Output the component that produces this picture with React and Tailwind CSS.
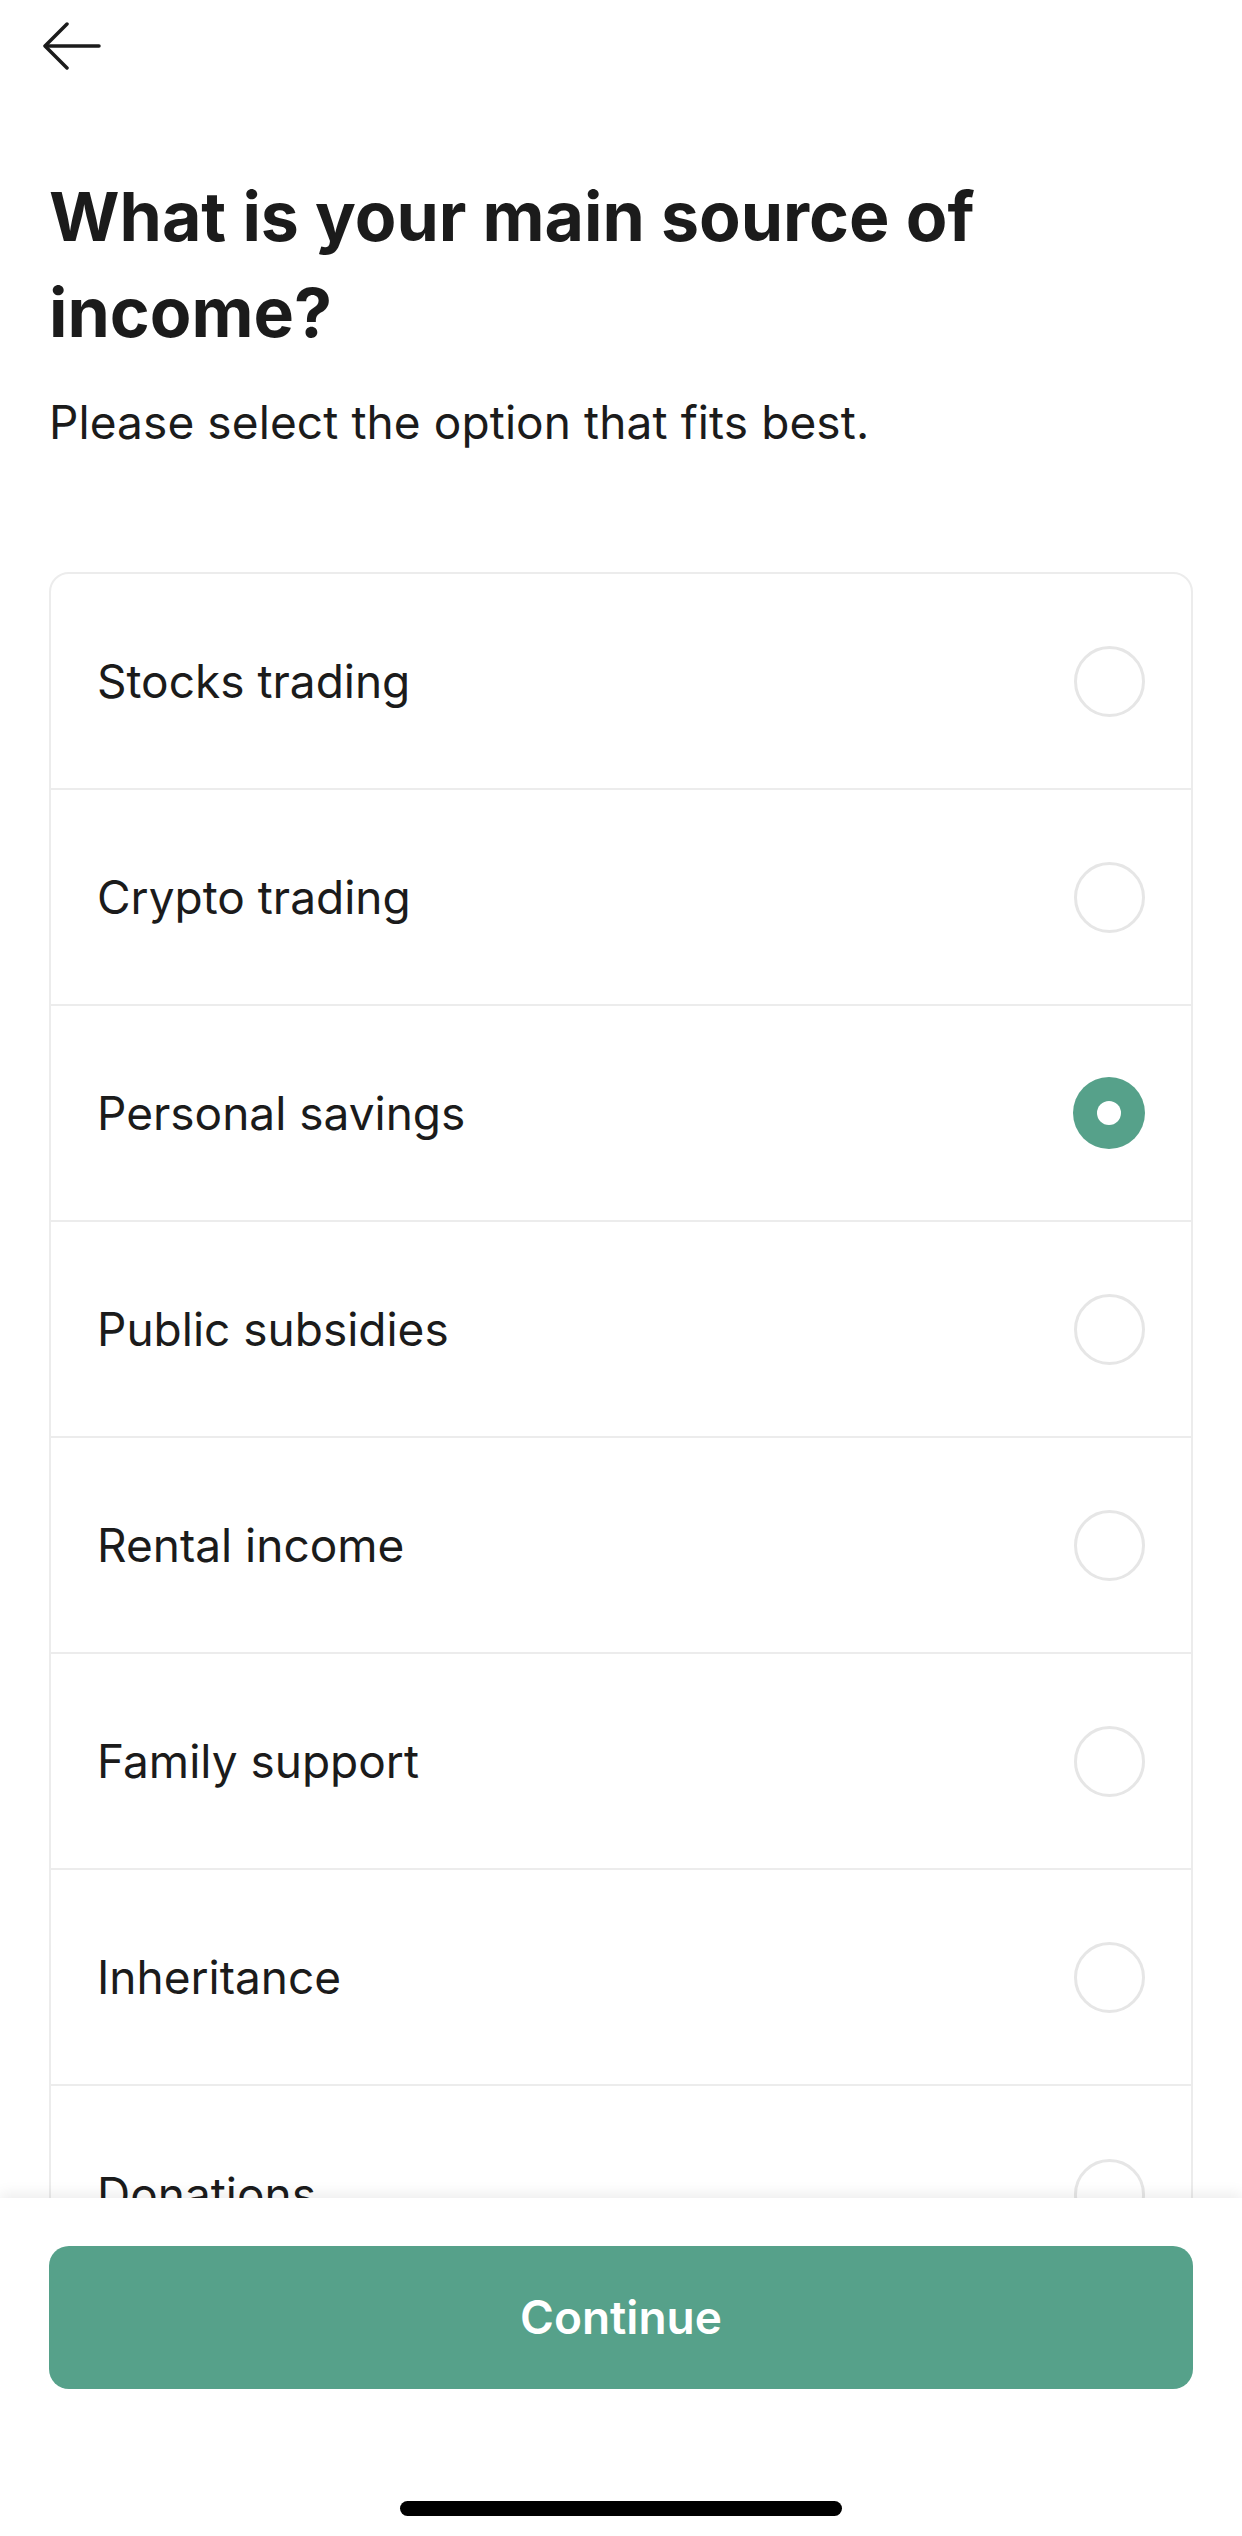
import { useState } from 'react';

const OPTIONS = [
  'Stocks trading',
  'Crypto trading',
  'Personal savings',
  'Public subsidies',
  'Rental income',
  'Family support',
  'Inheritance',
  'Donations',
];

function Radio({ checked }) {
  if (checked) {
    return (
      <span className="flex h-[72px] w-[72px] shrink-0 items-center justify-center rounded-full bg-[#56a18a]">
        <span className="h-[24px] w-[24px] rounded-full bg-white" />
      </span>
    );
  }
  return <span className="h-[71px] w-[71px] shrink-0 rounded-full border-[3px] border-[#e6e6e6] bg-white" />;
}

export default function App() {
  const [selected, setSelected] = useState('Personal savings');

  return (
    <div
      className="flex h-[2536px] w-full flex-col overflow-hidden bg-white text-[#1b1b1b]"
      style={{ fontFamily: 'Inter, "Noto Sans", sans-serif' }}
    >
      {/* Scrollable content */}
      <div className="flex-1 overflow-hidden">
        <div className="pl-[43px] pt-[22px]">
          <svg width="58" height="48" viewBox="0 0 58 48" fill="none" stroke="#1b1b1b" strokeWidth="3.5" strokeLinecap="round" strokeLinejoin="round">
            <path d="M3 24H56" />
            <path d="M24 2L2 24L24 46" />
          </svg>
        </div>

        <div className="px-[49px]">
          <h1 className="mt-[98px] text-[68px] font-bold leading-[96px]">
            What is your main source of income?
          </h1>
          <p className="mt-[35px] text-[46px] leading-[54px] tracking-[0.1px]">Please select the option that fits best.</p>

          {/* Options card */}
          <div className="mt-[123px] overflow-hidden rounded-[20px] border-2 border-[#ececec]">
            {OPTIONS.map((opt, i) => (
              <button
                key={opt}
                onClick={() => setSelected(opt)}
                className={`flex h-[216px] w-full items-center justify-between pl-[46px] pr-[46px] text-left ${
                  i < OPTIONS.length - 1 ? 'border-b-2 border-[#ececec]' : ''
                }`}
              >
                <span className="text-[46px]">{opt}</span>
                <Radio checked={selected === opt} />
              </button>
            ))}
          </div>
        </div>
      </div>

      {/* Footer */}
      <div className="relative z-10 flex h-[338px] shrink-0 flex-col items-center bg-white px-[49px] pt-[48px] shadow-[0_-4px_14px_rgba(0,0,0,0.08)]">
        <button className="h-[143px] w-full rounded-[20px] bg-[#56a18a] text-[46px] font-semibold text-white">
          Continue
        </button>
        <div className="mt-[112px] h-[15px] w-[442px] rounded-full bg-black" />
      </div>
    </div>
  );
}
